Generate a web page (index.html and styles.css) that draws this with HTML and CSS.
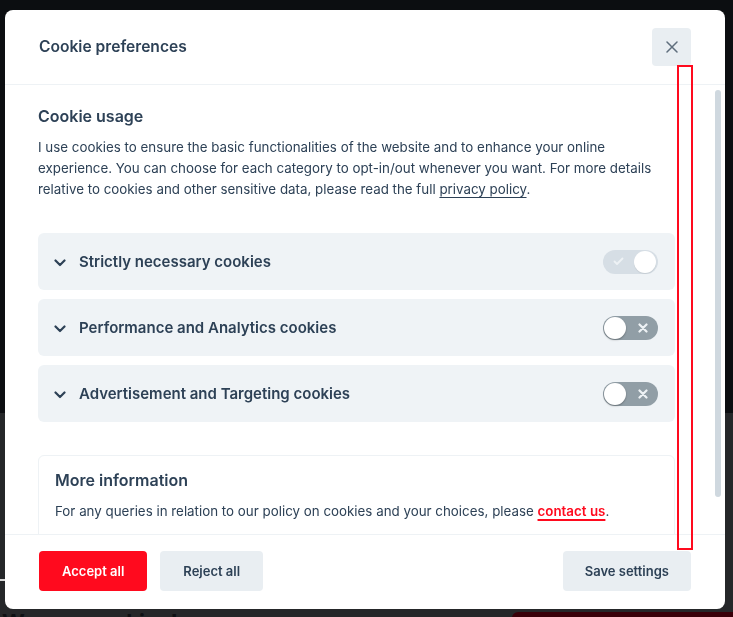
FILE: index.html
```html
<!DOCTYPE html>
<html lang="en">
<head>
<meta charset="utf-8">
<title>Cookie preferences</title>
<link rel="stylesheet" href="styles.css">
</head>
<body>
<div class="page">
  <div class="page-top"></div>
  <div class="page-bottom">
    <div class="page-dash"></div>
    <div class="page-row">
      <h2 class="page-title">We use cookies!</h2>
      <div class="page-btn"></div>
    </div>
  </div>
</div>

<div class="modal" role="dialog" aria-label="Cookie preferences">
  <header class="modal-header">
    <h1 class="modal-title">Cookie preferences</h1>
    <button class="close-btn" aria-label="Close">
      <svg width="12" height="12" viewBox="0 0 12 12"><path d="M1 1L11 11M11 1L1 11" stroke="#5f6e7d" stroke-width="1.5" stroke-linecap="round" fill="none"/></svg>
    </button>
  </header>

  <div class="modal-body">
    <h2 class="section-title">Cookie usage</h2>
    <p class="section-text">I use cookies to ensure the basic functionalities of the website and to enhance your online experience. You can choose for each category to opt-in/out whenever you want. For more details relative to cookies and other sensitive data, please read the full <a class="link" href="#">privacy policy</a>.</p>

    <div class="blocks">
      <div class="block">
        <svg class="chevron" width="12" height="8" viewBox="0 0 12 8"><path d="M1.5 1.5L6 6L10.5 1.5" stroke="#2d4156" stroke-width="2.2" fill="none" stroke-linecap="round" stroke-linejoin="round"/></svg>
        <span class="block-title">Strictly necessary cookies</span>
        <span class="toggle toggle-on toggle-disabled">
          <svg class="toggle-icon icon-check" width="11" height="9" viewBox="0 0 11 9"><path d="M1.5 4.5L4 7L9.5 1.5" stroke="#eef2f5" stroke-width="1.8" fill="none" stroke-linecap="round" stroke-linejoin="round"/></svg>
          <span class="knob"></span>
        </span>
      </div>
      <div class="block">
        <svg class="chevron" width="12" height="8" viewBox="0 0 12 8"><path d="M1.5 1.5L6 6L10.5 1.5" stroke="#2d4156" stroke-width="2.2" fill="none" stroke-linecap="round" stroke-linejoin="round"/></svg>
        <span class="block-title">Performance and Analytics cookies</span>
        <span class="toggle toggle-off">
          <span class="knob"></span>
          <svg class="toggle-icon icon-x" width="10" height="10" viewBox="0 0 10 10"><path d="M1.5 1.5L8.5 8.5M8.5 1.5L1.5 8.5" stroke="#eef2f5" stroke-width="2.2" fill="none" stroke-linecap="round"/></svg>
        </span>
      </div>
      <div class="block">
        <svg class="chevron" width="12" height="8" viewBox="0 0 12 8"><path d="M1.5 1.5L6 6L10.5 1.5" stroke="#2d4156" stroke-width="2.2" fill="none" stroke-linecap="round" stroke-linejoin="round"/></svg>
        <span class="block-title">Advertisement and Targeting cookies</span>
        <span class="toggle toggle-off">
          <span class="knob"></span>
          <svg class="toggle-icon icon-x" width="10" height="10" viewBox="0 0 10 10"><path d="M1.5 1.5L8.5 8.5M8.5 1.5L1.5 8.5" stroke="#eef2f5" stroke-width="2.2" fill="none" stroke-linecap="round"/></svg>
        </span>
      </div>
    </div>

    <div class="info">
      <h2 class="section-title">More information</h2>
      <p class="section-text">For any queries in relation to our policy on cookies and your choices, please <a class="link link-red" href="#">contact us</a>.</p>
    </div>
  </div>

  <footer class="modal-footer">
    <div class="btn-group">
      <button class="btn btn-primary">Accept all</button>
      <button class="btn btn-secondary">Reject all</button>
    </div>
    <button class="btn btn-secondary btn-save">Save settings</button>
  </footer>

  <div class="scroll-thumb"></div>
  <div class="focus-outline"></div>
</div>
</body>
</html>
```

FILE: styles.css
```css
* { box-sizing: border-box; }

html, body {
  margin: 0;
  padding: 0;
  height: 100%;
  overflow: hidden;
}

body {
  background: #0c0e11;
  font-family: Inter, "Noto Sans", "Liberation Sans", sans-serif;
  color: #2d4156;
}

.page {
  height: 100%;
  display: flex;
  flex-direction: column;
}

.page-top {
  flex: none;
  height: 413px;
  background: #0c0e11;
}

.page-bottom {
  flex: 1;
  min-height: 0;
  overflow: hidden;
  background: #252729;
  padding-top: 166px;
}

.page-dash {
  width: 6px;
  height: 2px;
  background: #d8d8d8;
  margin-bottom: 28px;
}

.page-row {
  display: flex;
  justify-content: space-between;
  align-items: flex-start;
}

.page-title {
  margin: 0 0 0 2px;
  font-size: 22px;
  font-weight: 700;
  color: #0e1013;
  line-height: 26px;
}

.page-btn {
  width: 221px;
  height: 40px;
  margin-top: 3px;
  background: #3a0009;
  border-radius: 6px 0 0 0;
}

/* Modal */
.modal {
  position: fixed;
  left: 5px;
  top: 10px;
  width: 720px;
  height: 599px;
  background: #ffffff;
  border-radius: 8px;
  display: flex;
  flex-direction: column;
  overflow: hidden;
}

.modal-header {
  height: 75px;
  flex: none;
  display: flex;
  align-items: center;
  justify-content: space-between;
  padding: 0 34px 0 34px;
  border-bottom: 1px solid #eef2f5;
}

.modal-title {
  margin: 0;
  font-size: 15.6px;
  font-weight: 600;
  line-height: 24px;
  color: #2d4156;
}

.close-btn {
  width: 39px;
  height: 38px;
  border: 0;
  border-radius: 4px;
  background: #e9eef2;
  display: flex;
  align-items: center;
  justify-content: center;
  padding: 0;
}

.modal-body {
  flex: 1;
  overflow: hidden;
  padding: 19px 50px 0 33px;
}

.section-title {
  margin: 0;
  font-size: 16px;
  font-weight: 600;
  line-height: 24px;
  color: #2d4156;
}

.section-text {
  margin: 9px 0 0 0;
  font-size: 13.35px;
  line-height: 21px;
  color: #2d4156;
}

.link {
  color: #2d4156;
  text-decoration: underline;
  text-underline-offset: 3px;
  text-decoration-thickness: 1px;
}

.link-red {
  color: #ff0a1e;
  font-weight: 600;
  text-decoration-thickness: 2px;
}

.blocks {
  margin-top: 33px;
  display: flex;
  flex-direction: column;
  gap: 9px;
}

.block {
  height: 57px;
  background: #eff3f6;
  border-radius: 6px;
  display: flex;
  align-items: center;
  padding: 0 17px 0 16px;
}

.chevron {
  flex: none;
  margin-right: 13px;
  margin-top: 2px;
}

.block-title {
  flex: 1;
  font-size: 15px;
  font-weight: 600;
  color: #2d4156;
}

.toggle {
  position: relative;
  width: 55px;
  height: 24px;
  border-radius: 12px;
  display: flex;
  align-items: center;
  flex: none;
}

.toggle-off {
  background: #919ea6;
  justify-content: space-between;
  padding: 0 10px 0 1px;
}

.toggle-on {
  background: #d6dee5;
  justify-content: space-between;
  padding: 0 2px 0 10px;
}

.knob {
  width: 22px;
  height: 22px;
  border-radius: 50%;
  background: #ffffff;
  box-shadow: 0 1px 2px rgba(0, 0, 0, 0.3);
}

.toggle-on .knob {
  box-shadow: 0 1px 1px rgba(0, 0, 0, 0.08);
}

.info {
  margin-top: 33px;
  border: 1px solid #eef2f5;
  border-radius: 6px;
  padding: 12px 16px 24px 16px;
}

.info .section-text {
  margin-top: 9px;
}

.modal-footer {
  flex: none;
  height: 75px;
  border-top: 1px solid #eef2f5;
  display: flex;
  align-items: flex-start;
  justify-content: space-between;
  padding: 16px 34px 0 34px;
}

.btn-group {
  display: flex;
  gap: 13px;
}

.btn {
  height: 40px;
  border: 0;
  border-radius: 4px;
  font-family: Inter, "Noto Sans", "Liberation Sans", sans-serif;
  font-size: 13px;
  font-weight: 600;
  padding: 0 23px;
  cursor: pointer;
}

.btn-primary {
  background: #ff0a1e;
  color: #ffffff;
}

.btn-secondary {
  background: #e9eef2;
  color: #2d4156;
}

.btn-save {
  padding: 0 22px;
}

.scroll-thumb {
  position: absolute;
  left: 710px;
  top: 80px;
  width: 6px;
  height: 407px;
  border-radius: 3px;
  background: #cfd8df;
}

.focus-outline {
  position: absolute;
  left: 672px;
  top: 55px;
  width: 16px;
  height: 485px;
  border: 2px solid #ff0a1e;
}
```
